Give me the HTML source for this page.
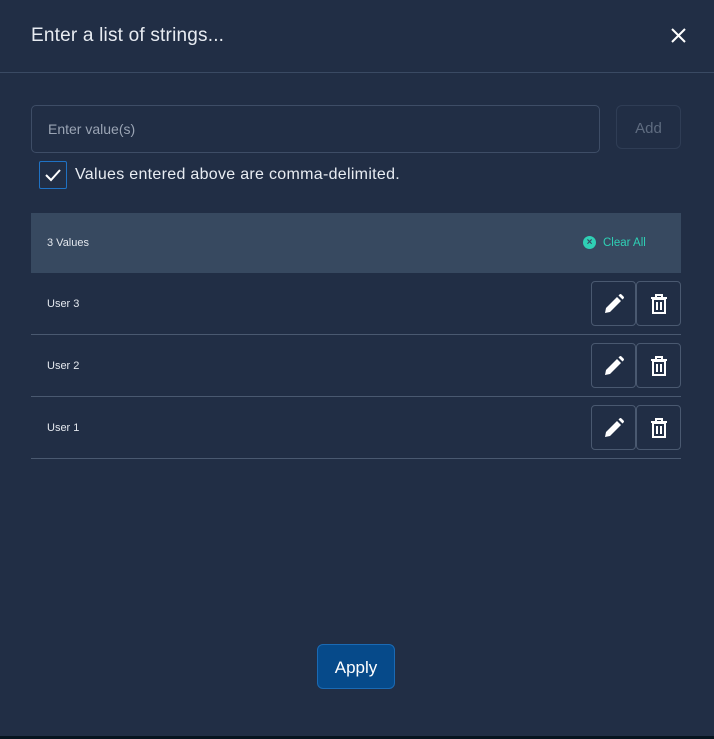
<!DOCTYPE html>
<html><head><meta charset="utf-8"><style>
*{box-sizing:border-box;margin:0;padding:0}
body{width:714px;height:739px;background:#06141f;font-family:"Liberation Sans",sans-serif;overflow:hidden;position:relative}
.m{position:absolute;left:0;top:0;width:714px;height:736px;background:#212e45}
.t{position:absolute;left:31px;top:25px;font-size:19px;color:#e8ecf2;letter-spacing:0.2px}
.x{position:absolute;left:670px;top:27px}
.hr{position:absolute;left:0;top:72px;width:714px;height:1px;background:#3a4a63}
.in{position:absolute;left:31px;top:105px;width:569px;height:48px;border:1px solid #3e4d66;border-radius:5px;padding:15px 16px;font-size:14px;color:#9aa4b4}
.add{position:absolute;left:616px;top:105px;width:65px;height:44px;border:1px solid #2f3d55;border-radius:6px;color:#5f6c80;font-size:15px;text-align:center;line-height:45px}
.cb{position:absolute;left:39px;top:161px;width:28px;height:28px;border:1px solid #1f72c4;border-radius:2px}
.cbl{position:absolute;left:75px;top:166px;font-size:16px;color:#e8ecf2;letter-spacing:0.3px}
.hd{position:absolute;left:31px;top:213px;width:650px;height:60px;background:#374960}
.hd span{position:absolute;left:16px;top:24px;font-size:11px;color:#e4e8ee}
.ca{position:absolute;left:572px;top:24px;font-size:11.5px;color:#2fd0b5}
.ca i{position:absolute;left:-20px;top:-1px;width:13px;height:13px;border-radius:50%;background:#2fd0b5;color:#374960;font-style:normal;font-size:10px;font-weight:bold;text-align:center;line-height:13px}
.row{position:absolute;left:31px;width:650px;height:62px;border-bottom:1px solid #4a5970}
.row span{position:absolute;left:16px;top:25px;font-size:11px;color:#e4e8ee}
.b{position:absolute;top:8px;width:45px;height:45px;border:1px solid #4a5970;border-radius:4px;display:flex;align-items:center;justify-content:center}
.ap{position:absolute;left:317px;top:644px;width:78px;height:45px;background:#064a8a;border:1px solid #1a6ab4;border-radius:6px;color:#fff;font-size:17px;text-align:center;line-height:45px}
</style></head><body>
<div class="m">
<div class="t">Enter a list of strings...</div>
<svg class="x" width="17" height="17" viewBox="0 0 17 17"><path d="M2 2L15 15M15 2L2 15" stroke="#fff" stroke-width="2"/></svg>
<div class="hr"></div>
<div class="in">Enter value(s)</div>
<div class="add">Add</div>
<div class="cb"><svg width="26" height="26" viewBox="0 0 26 26"><path d="M6 13l5 5 9-10" stroke="#fff" stroke-width="2" fill="none"/></svg></div>
<div class="cbl">Values entered above are comma-delimited.</div>
<div class="hd"><span>3 Values</span><div class="ca"><i>×</i>Clear All</div></div>
<div class="row" style="top:273px"><span>User 3</span>
<div class="b" style="left:560px"><svg width="22" height="22" viewBox="0 0 22 22"><path d="M2 20l1-5L14 4l4 4L7 19z" fill="#fff"/><path d="M15.5 2.5l4 4 1-1a1.4 1.4 0 0 0 0-2l-2-2a1.4 1.4 0 0 0-2 0z" fill="#fff"/></svg></div>
<div class="b" style="left:605px"><svg width="18" height="20" viewBox="0 0 18 20"><path d="M1 4h16M6 4V1h6v3" stroke="#fff" stroke-width="2" fill="none"/><rect x="3" y="5" width="12" height="14" stroke="#fff" stroke-width="2" fill="none"/><path d="M7 8v8M11 8v8" stroke="#fff" stroke-width="2"/></svg></div></div>
<div class="row" style="top:335px"><span>User 2</span>
<div class="b" style="left:560px"><svg width="22" height="22" viewBox="0 0 22 22"><path d="M2 20l1-5L14 4l4 4L7 19z" fill="#fff"/><path d="M15.5 2.5l4 4 1-1a1.4 1.4 0 0 0 0-2l-2-2a1.4 1.4 0 0 0-2 0z" fill="#fff"/></svg></div>
<div class="b" style="left:605px"><svg width="18" height="20" viewBox="0 0 18 20"><path d="M1 4h16M6 4V1h6v3" stroke="#fff" stroke-width="2" fill="none"/><rect x="3" y="5" width="12" height="14" stroke="#fff" stroke-width="2" fill="none"/><path d="M7 8v8M11 8v8" stroke="#fff" stroke-width="2"/></svg></div></div>
<div class="row" style="top:397px"><span>User 1</span>
<div class="b" style="left:560px"><svg width="22" height="22" viewBox="0 0 22 22"><path d="M2 20l1-5L14 4l4 4L7 19z" fill="#fff"/><path d="M15.5 2.5l4 4 1-1a1.4 1.4 0 0 0 0-2l-2-2a1.4 1.4 0 0 0-2 0z" fill="#fff"/></svg></div>
<div class="b" style="left:605px"><svg width="18" height="20" viewBox="0 0 18 20"><path d="M1 4h16M6 4V1h6v3" stroke="#fff" stroke-width="2" fill="none"/><rect x="3" y="5" width="12" height="14" stroke="#fff" stroke-width="2" fill="none"/><path d="M7 8v8M11 8v8" stroke="#fff" stroke-width="2"/></svg></div></div>
<div class="ap">Apply</div>
</div>
</body></html>
